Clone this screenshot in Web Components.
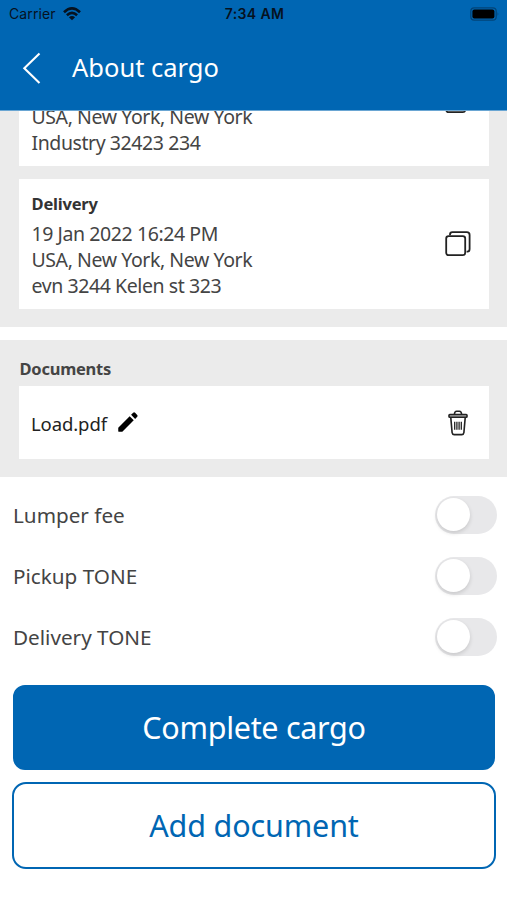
<!DOCTYPE html>
<html lang="en">
<head>
<meta charset="utf-8">
<meta name="viewport" content="width=device-width, initial-scale=1">
<title>About cargo</title>
<style>
  :root {
    --color-primary: #0066b3;
    --color-panel: #ebebeb;
    --color-text: #444;
  }
  body {
    margin: 0;
    background: #fff;
    color: var(--color-text);
    font-family: "Noto Sans", "Open Sans", sans-serif;
  }
</style>
</head>
<body>
<cargo-app></cargo-app>

<script>
(function () {
  'use strict';

  // Shared base: renders static markup into an open shadow root
  class CargoElement extends HTMLElement {
    connectedCallback() {
      if (this.shadowRoot) return;
      this.attachShadow({ mode: 'open' });
      this.shadowRoot.innerHTML = this.render();
    }
  }

  /* ── Status bar ─────────────────────────────── */
  class StatusBar extends CargoElement {
    render() {
      return `
        <style>
          :host {
            display: grid; grid-template-columns: 1fr auto 1fr; align-items: center;
            height: 27px; padding: 0 7px 0 9px;
            color: #06121f; font: 500 14px/27px Inter, sans-serif;
          }
          .left { display: flex; align-items: center; gap: 7px; }
          .carrier { font-weight: 400; letter-spacing: 0.1px; }
          .time { font-weight: 600; letter-spacing: 0.35px; }
          .battery { justify-self: end; }
          svg { display: block; }
        </style>
        <div class="left">
          <span class="carrier">Carrier</span>
          <svg width="18" height="14" viewBox="0 0 18 14" fill="none" stroke="currentColor" stroke-width="2.6">
            <path d="M1 5.2Q9-2.4 17 5.2"/>
            <path d="M3.9 8.3Q9 3.6 14.1 8.3"/>
            <path d="M9 13.3L5.9 10.3Q9 7.6 12.1 10.3Z" fill="currentColor" stroke="none"/>
          </svg>
        </div>
        <span class="time">7:34 AM</span>
        <svg class="battery" width="30" height="14" viewBox="0 0 30 14">
          <rect x=".8" y=".9" width="25.4" height="12.2" rx="3.4" fill="none" stroke="#06121f" stroke-opacity=".4" stroke-width="1.2"/>
          <rect x="2.4" y="2.6" width="22" height="9" rx="2" fill="#000"/>
          <path d="M27.6 5q1.6 2 0 4z" fill="#06121f" fill-opacity=".4"/>
        </svg>`;
    }
  }

  /* ── Header ─────────────────────────────────── */
  class AppHeader extends CargoElement {
    render() {
      return `
        <style>
          :host { display: block; flex: none; height: 111px; background: var(--color-primary); border-bottom: 1px solid #6aa6d3; box-sizing: border-box; color: #fff; }
          .bar { display: flex; align-items: center; height: 82px; padding-left: 22px; }
          svg { display: block; margin-right: 30px; }
          .title { font-size: 25.5px; line-height: 36px; padding-bottom: 2px; white-space: nowrap; }
        </style>
        <status-bar></status-bar>
        <div class="bar">
          <svg width="20" height="34" viewBox="0 0 20 34" fill="none" stroke="currentColor" stroke-width="2.1">
            <path d="M17.5 2.5L2.3 17.2L17.5 32"/>
          </svg>
          <span class="title"><slot></slot></span>
        </div>`;
    }
  }

  /* ── Address card ───────────────────────────── */
  class StopCard extends CargoElement {
    render() {
      const name = this.getAttribute('name');
      return `
        <style>
          :host {
            display: flex; flex: none; align-items: center; justify-content: space-between;
            box-sizing: border-box; height: 130px; padding: 0 18px 0 12.5px; background: #fff;
          }
          .info { align-self: flex-end; padding-bottom: 10.5px; }
          .name { font-size: 16.5px; line-height: 23px; font-weight: 700; letter-spacing: -0.2px; margin-bottom: 6px; color: #333; }
          .lines { font-size: 19.5px; line-height: 26px; letter-spacing: -0.42px; white-space: pre; }
          svg { display: block; }
        </style>
        <div class="info">
          ${name ? `<div class="name">${name}</div>` : ''}
          <div class="lines"><slot></slot></div>
        </div>
        <svg width="26" height="26" viewBox="0 0 26 26" fill="none" stroke="#222" stroke-width="1.8">
          <path d="M5 4.2V3.6Q5 1.2 7.4 1.2H21.8Q24.6 1.2 24.6 4V18Q24.6 20.6 22.4 20.6H21.6"/>
          <rect x="1.2" y="5.2" width="19" height="19" rx="2.4"/>
        </svg>`;
    }
  }

  /* ── Document row ───────────────────────────── */
  class DocumentCard extends CargoElement {
    render() {
      return `
        <style>
          :host {
            display: flex; align-items: center; box-sizing: border-box;
            height: 73px; padding: 0 21px 0 12px; background: #fff; color: #222;
          }
          .file { font-size: 18.5px; line-height: 26px; margin: 2px 8px 0 0; letter-spacing: -0.1px; white-space: nowrap; }
          svg { display: block; flex: none; }
          .pencil { margin-bottom: 1px; }
          .trash { margin-left: auto; }
        </style>
        <span class="file"><slot></slot></span>
        <svg class="pencil" width="26" height="26" viewBox="0 0 24 24" fill="#000">
          <path d="M3 17.25V20.2Q3 21 3.8 21H6.75L17.3 10.45l-3.75-3.75L3 17.25zM20.5 7.25a1.3 1.3 0 0 0 0-1.8l-1.95-1.95a1.3 1.3 0 0 0-1.8 0l-1.9 1.9 3.75 3.75z"/>
        </svg>
        <svg class="trash" width="20" height="26" viewBox="0 0 20 26" fill="none" stroke="#222" stroke-width="1.6">
          <path d="M6.4 4.3Q6.6 1.2 8.6 1.2H11.4Q13.4 1.2 13.6 4.3"/>
          <rect x="1" y="4.5" width="18" height="2.8" rx=".8" fill="#aaa"/>
          <path d="M2.8 7.6L4.1 22.6Q4.4 24.6 6.2 24.6H13.8Q15.6 24.6 15.9 22.6L17.2 7.6"/>
          <path d="M6.7 11.8V19.8M8.9 11.8V19.8M11.1 11.8V19.8M13.3 11.8V19.8" stroke-width="1.3"/>
        </svg>`;
    }
  }

  /* ── Switch row ─────────────────────────────── */
  class SwitchRow extends CargoElement {
    render() {
      return `
        <style>
          :host {
            display: flex; align-items: center; justify-content: space-between;
            height: 61px; padding: 0 10px 0 13px;
            font-size: 20.7px; line-height: 28px; white-space: nowrap;
          }
          .track {
            display: flex; align-items: center; box-sizing: border-box;
            width: 62px; height: 38px; padding: 0 2px 1px; border-radius: 19px; background: #e8e8ea;
          }
          .thumb { width: 33px; height: 33px; border-radius: 50%; background: #fff; box-shadow: 0 2px 4px rgba(0,0,0,.14); }
        </style>
        <span class="label"><slot></slot></span>
        <span class="track" role="switch" aria-checked="false"><span class="thumb"></span></span>`;
    }
  }

  /* ── Button ─────────────────────────────────── */
  class CargoButton extends CargoElement {
    render() {
      return `
        <style>
          :host { display: block; margin: 0 11px 0 12px; }
          button {
            display: block; box-sizing: border-box; width: 100%; height: 87px; padding: 0 0 1px;
            border: 2px solid var(--color-primary); border-radius: 14px;
            background: #fff; color: var(--color-primary);
            font: 400 30.5px/40px "Noto Sans", "Open Sans", sans-serif; letter-spacing: -0.15px; white-space: nowrap;
          }
          :host([filled]) { margin: 0 12px 0 13px; }
          :host([filled]) button { height: 85px; border-radius: 12px; background: var(--color-primary); color: #fff; letter-spacing: -0.3px; }
        </style>
        <button type="button"><slot></slot></button>`;
    }
  }

  /* ── Screen ─────────────────────────────────── */
  class CargoApp extends CargoElement {
    render() {
      return `
        <style>
          :host { display: flex; flex-direction: column; width: 507px; height: 900px; overflow: hidden; background: #fff; }
          section { box-sizing: border-box; background: var(--color-panel); padding: 0 18px 18px 19px; flex: none; }
          /* scrolled list: the upper stop runs up under the header */
          .stops { display: flex; flex-direction: column; justify-content: flex-end; gap: 13px; height: 216px; overflow: hidden; }
          .docs { margin-top: 13px; height: 137px; padding-top: 17px; }
          h2 { margin: 0 0 6px; padding-left: 0.5px; font-size: 16.5px; line-height: 23px; font-weight: 700; letter-spacing: -0.25px; color: #444; }
          .switches { padding-top: 7px; }
          .actions { display: flex; flex-direction: column; gap: 12px; padding-top: 18px; }
        </style>
        <app-header>About cargo</app-header>
        <section class="stops">
          <stop-card>USA, New York, New York\nIndustry 32423 234</stop-card>
          <stop-card name="Delivery">19 Jan 2022 16:24 PM\nUSA, New York, New York\nevn 3244 Kelen st 323</stop-card>
        </section>
        <section class="docs">
          <h2>Documents</h2>
          <document-card>Load.pdf</document-card>
        </section>
        <div class="switches">
          <switch-row>Lumper fee</switch-row>
          <switch-row>Pickup TONE</switch-row>
          <switch-row>Delivery TONE</switch-row>
        </div>
        <div class="actions">
          <cargo-button filled>Complete cargo</cargo-button>
          <cargo-button>Add document</cargo-button>
        </div>`;
    }
  }

  customElements.define('status-bar', StatusBar);
  customElements.define('app-header', AppHeader);
  customElements.define('stop-card', StopCard);
  customElements.define('document-card', DocumentCard);
  customElements.define('switch-row', SwitchRow);
  customElements.define('cargo-button', CargoButton);
  customElements.define('cargo-app', CargoApp);
})();
</script>
</body>
</html>
